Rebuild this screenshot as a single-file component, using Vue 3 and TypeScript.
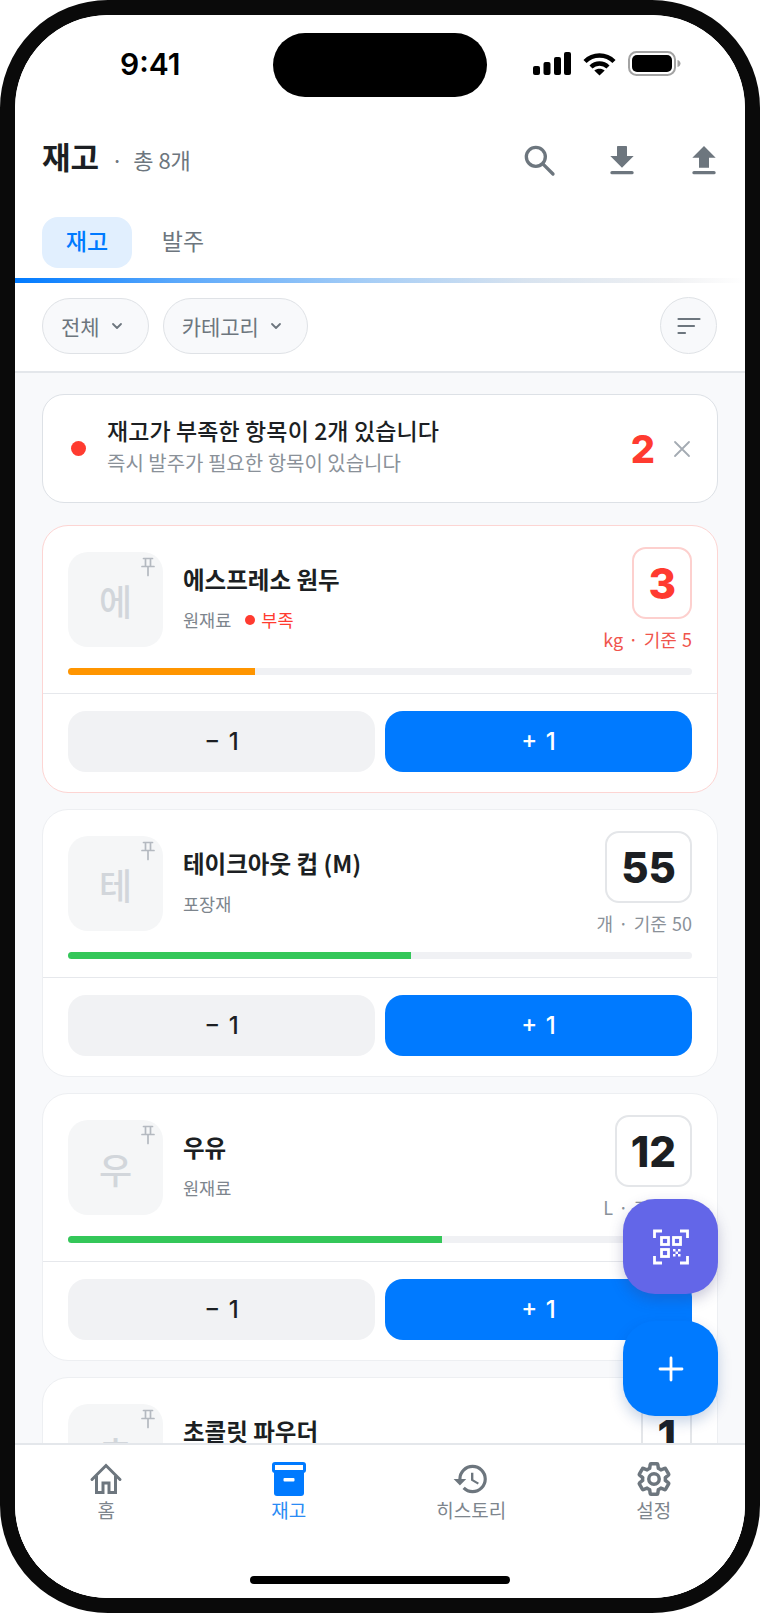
<script setup lang="ts">
interface Item {
  name: string;
  initial: string;
  category: string;
  qty: number;
  unit: string;
  base: number;
  percent: number;
  color: string;
  low?: boolean;
}

const items: Item[] = [
  { name: '에스프레소 원두', initial: '에', category: '원재료', qty: 3, unit: 'kg', base: 5, percent: 30, color: '#ff9500', low: true },
  { name: '테이크아웃 컵 (M)', initial: '테', category: '포장재', qty: 55, unit: '개', base: 50, percent: 55, color: '#34c759' },
  { name: '우유', initial: '우', category: '원재료', qty: 12, unit: 'L', base: 10, percent: 60, color: '#34c759' },
  { name: '초콜릿 파우더', initial: '초', category: '원재료', qty: 1, unit: 'kg', base: 3, percent: 20, color: '#ff9500' }
];

const navItems = [
  { key: 'home', label: '홈' },
  { key: 'stock', label: '재고', active: true },
  { key: 'history', label: '히스토리' },
  { key: 'settings', label: '설정' }
];
</script>

<template>
  <div class="phone">
    <div class="screen">
      <div class="island"></div>

      <div class="status-bar">
        <span class="clock">9:41</span>
        <div class="status-icons">
          <svg width="38" height="23" viewBox="0 0 38 23" fill="#000">
            <rect x="0" y="14" width="7" height="9" rx="2" />
            <rect x="10.5" y="10" width="7" height="13" rx="2" />
            <rect x="21" y="5" width="7" height="18" rx="2" />
            <rect x="31" y="0" width="7" height="23" rx="2" />
          </svg>
          <svg width="33" height="24" viewBox="0 0 33 24" fill="none" stroke="#000" stroke-width="4.4">
            <path d="M2 9.5C10 1.5 23 1.5 31 9.5" />
            <path d="M8 15C12.8 10.4 20.2 10.4 25 15" />
            <path d="M16.5 23.5L11.3 18.6C14.2 16.2 18.8 16.2 21.7 18.6Z" fill="#000" stroke="none" />
          </svg>
          <svg width="53" height="25" viewBox="0 0 53 25">
            <rect x="1" y="1" width="46" height="23" rx="7.5" fill="none" stroke="#a3a3a3" stroke-width="2" />
            <rect x="4" y="4" width="40" height="17" rx="5" fill="#000" />
            <path d="M49.5 9c2 .5 3 2 3 3.500s-1 3-3 3.500z" fill="#a3a3a3" />
          </svg>
        </div>
      </div>

      <header class="header">
        <div class="title-wrap">
          <h1 class="title">재고</h1>
          <span class="count">· &nbsp;총 8개</span>
        </div>
        <div class="header-icons">
          <svg class="head-icon" viewBox="0 0 24 24" fill="none" stroke="#6d767e" stroke-width="2" stroke-linecap="round">
            <circle cx="9.500" cy="9.500" r="5.700" />
            <path d="M14 14L19.800 19.800" />
          </svg>
          <svg class="head-icon" viewBox="0 0 24 24" fill="#6d767e">
            <path d="M19 9h-4V3.500a.5.500 0 0 0-.5-.5h-5a.5.500 0 0 0-.5.500V9H5l7 7 7-7z" />
            <rect x="5" y="18" width="14" height="2" rx="1" />
          </svg>
          <svg class="head-icon" viewBox="0 0 24 24" fill="#6d767e">
            <path d="M9 16h6v-6h4l-7-7-7 7h4v6z" />
            <rect x="5" y="18" width="14" height="2" rx="1" />
          </svg>
        </div>
      </header>

      <div class="tabs">
        <div class="tab tab-active">재고</div>
        <div class="tab">발주</div>
      </div>
      <div class="tab-line"></div>

      <div class="filters">
        <button class="chip">
          전체
          <svg width="14" height="14" viewBox="0 0 14 14" fill="none" stroke="#6d767e" stroke-width="1.800" stroke-linecap="round" stroke-linejoin="round"><path d="M3 5l4 4L11 5" /></svg>
        </button>
        <button class="chip">
          카테고리
          <svg width="14" height="14" viewBox="0 0 14 14" fill="none" stroke="#6d767e" stroke-width="1.800" stroke-linecap="round" stroke-linejoin="round"><path d="M3 5l4 4L11 5" /></svg>
        </button>
        <button class="sort-btn">
          <svg width="24" height="24" viewBox="0 0 24 24" fill="none" stroke="#6d767e" stroke-width="2.200" stroke-linecap="round">
            <path d="M1.500 5H22.500M1.500 12H17M1.500 19H8" />
          </svg>
        </button>
      </div>

      <main class="content">
        <section class="alert">
          <span class="alert-dot"></span>
          <div class="alert-text">
            <div class="alert-title">재고가 부족한 항목이 2개 있습니다</div>
            <div class="alert-sub">즉시 발주가 필요한 항목이 있습니다</div>
          </div>
          <span class="alert-count">2</span>
          <svg class="alert-close" width="18" height="18" viewBox="0 0 18 18" fill="none" stroke="#a4abb3" stroke-width="1.800" stroke-linecap="round">
            <path d="M2 2L16 16M16 2L2 16" />
          </svg>
        </section>

        <article v-for="item in items" :key="item.name" class="card" :class="{ 'card-low': item.low }">
          <div class="card-main">
            <div class="card-row">
              <div class="thumb">
                <span>{{ item.initial }}</span>
                <svg class="pin" width="14" height="20" viewBox="0 0 14 20" fill="none" stroke="#b4b9c0" stroke-width="1.700" stroke-linecap="round">
                  <path d="M2.500 1.500H11.500M4.500 1.500V9M9.500 1.500V9M1 9.500H13M7 9.500V18.500" />
                </svg>
              </div>
              <div class="info">
                <div class="name">{{ item.name }}</div>
                <div class="meta">
                  <span>{{ item.category }}</span>
                  <span v-if="item.low" class="low-tag"><i></i>부족</span>
                </div>
              </div>
              <div class="stock">
                <div class="qty-box">{{ item.qty }}</div>
                <div class="qty-sub">{{ item.unit }} · 기준 {{ item.base }}</div>
              </div>
            </div>
            <div class="progress">
              <div class="progress-fill" :style="{ width: item.percent + '%', background: item.color }"></div>
            </div>
          </div>
          <div class="actions">
            <button class="btn btn-minus">− 1</button>
            <button class="btn btn-plus">+ 1</button>
          </div>
        </article>
      </main>

      <button class="fab fab-scan">
        <svg width="36" height="36" viewBox="0 0 36 36" fill="none" stroke="#fff" stroke-width="2.800">
          <path d="M1.500 9V2H9M27 2H34.500V9M1.500 27V34H9M27 34H34.500V27" />
          <rect x="8.500" y="8.500" width="7" height="7" />
          <rect x="20.500" y="8.500" width="7" height="7" />
          <rect x="8.500" y="20.500" width="7" height="7" />
          <path d="M20 20h2.500v2.500H20zM25 20h2.500v2.500H25zM22.500 22.500H25V25h-2.500zM20 25h2.500v2.500H20zM25 25h2.500v2.500H25z" fill="#fff" stroke="none" />
        </svg>
      </button>
      <button class="fab fab-add">
        <svg width="26" height="26" viewBox="0 0 26 26" fill="none" stroke="#fff" stroke-width="2.800" stroke-linecap="round">
          <path d="M13 2V24M2 13H24" />
        </svg>
      </button>

      <nav class="tabbar">
        <div v-for="nav in navItems" :key="nav.key" class="nav-item" :class="{ 'nav-active': nav.active }">
          <svg v-if="nav.key === 'home'" width="38" height="38" viewBox="0 0 38 38" fill="none" stroke="#6d767e" stroke-width="3">
            <path d="M5 19.500L19 5.500L33 19.500" stroke-linecap="round" />
            <path d="M9.500 16V32.500H16V23H22V32.500H28.500V16" />
          </svg>
          <svg v-else-if="nav.key === 'stock'" width="38" height="38" viewBox="0 0 38 38">
            <rect x="2" y="2" width="34" height="11" rx="3" fill="#007aff" />
            <rect x="5" y="5" width="28" height="5" fill="#fff" />
            <path d="M4 12H34V33a3 3 0 0 1-3 3H7a3 3 0 0 1-3-3Z" fill="#007aff" />
            <rect x="13.500" y="18" width="11" height="3.500" rx="1" fill="#fff" />
          </svg>
          <svg v-else-if="nav.key === 'history'" width="38" height="38" viewBox="0 0 24 24" fill="#6d767e">
            <path d="M13 3a9 9 0 0 0-9 9H1l3.890 3.890.07.140L9 12H6c0-3.870 3.130-7 7-7s7 3.130 7 7-3.130 7-7 7c-1.930 0-3.680-.790-4.940-2.060l-1.420 1.420A8.954 8.954 0 0 0 13 21a9 9 0 0 0 0-18zm-1 5v5l4.280 2.540.720-1.210-3.500-2.080V8H12z" />
          </svg>
          <svg v-else width="38" height="38" viewBox="0 0 24 24" fill="none" stroke="#6d767e" stroke-width="2.200" stroke-linejoin="round">
            <path d="M19.140 12.940c.040-.300.060-.610.060-.940 0-.320-.020-.640-.070-.940l2.030-1.580a.490.490 0 0 0 .120-.610l-1.920-3.320a.488.488 0 0 0-.590-.220l-2.390.960c-.500-.380-1.030-.700-1.620-.940l-.360-2.540a.484.484 0 0 0-.480-.410h-3.840c-.240 0-.430.170-.470.410l-.360 2.540c-.590.240-1.130.570-1.620.940l-2.390-.960c-.220-.080-.470 0-.590.220L2.740 8.870c-.120.210-.080.470.120.610l2.030 1.580c-.050.300-.090.630-.090.940s.020.640.070.940l-2.030 1.580a.490.490 0 0 0-.120.610l1.920 3.320c.120.220.370.290.590.220l2.390-.960c.500.380 1.030.700 1.620.940l.360 2.540c.050.240.240.410.480.410h3.840c.240 0 .440-.170.470-.410l.360-2.540c.590-.240 1.130-.560 1.620-.940l2.390.960c.220.080.470 0 .590-.220l1.920-3.320c.120-.220.070-.470-.120-.610l-2.010-1.580z" />
            <circle cx="12" cy="12" r="3.300" />
          </svg>
          <span class="nav-label">{{ nav.label }}</span>
        </div>
      </nav>

      <div class="home-area">
        <div class="home-bar"></div>
      </div>
    </div>
  </div>
</template>

<style scoped>
.phone {
  width: 760px;
  height: 1613px;
  box-sizing: border-box;
  border: 15px solid #0a0a0a;
  border-radius: 108px;
  background: #fff;
  overflow: hidden;
  font-family: "Noto Sans CJK KR", "Noto Sans", sans-serif;
  color: #1c1f23;
}

.screen {
  position: relative;
  height: 100%;
  display: flex;
  flex-direction: column;
  background: #fff;
  border-radius: 92px;
  overflow: hidden;
}

.island {
  position: absolute;
  top: 18px;
  left: 258px;
  width: 214px;
  height: 64px;
  border-radius: 32px;
  background: #000;
}

.status-bar {
  flex: none;
  height: 105px;
  display: flex;
  justify-content: space-between;
  padding: 33px 64px 0 105px;
  box-sizing: border-box;
}

.clock {
  font-family: Inter, sans-serif;
  font-size: 30px;
  font-weight: 600;
  line-height: 32px;
  color: #000;
}

.status-icons {
  display: flex;
  align-items: center;
  gap: 12px;
  height: 25px;
  margin-top: 3px;
}

.header {
  flex: none;
  height: 78px;
  display: flex;
  align-items: center;
  justify-content: space-between;
  padding: 0 21px 0 27px;
}

.title-wrap {
  display: flex;
  align-items: baseline;
  gap: 12px;
  margin-bottom: 8px;
}

.title {
  margin: 0;
  font-size: 31px;
  font-weight: 700;
  color: #1c1f23;
}

.count {
  font-size: 22px;
  color: #6d767e;
}

.header-icons {
  display: flex;
  gap: 42px;
  margin-top: 4px;
}

.head-icon {
  width: 40px;
  height: 40px;
}

.tabs {
  flex: none;
  display: flex;
  gap: 6px;
  padding: 19px 27px 10px;
}

.tab {
  width: 90px;
  height: 51px;
  box-sizing: border-box;
  padding-bottom: 6px;
  border-radius: 16px;
  display: flex;
  align-items: center;
  justify-content: center;
  font-size: 23px;
  color: #6d767e;
}

.tab-active {
  background: #e1effe;
  color: #007aff;
  font-weight: 500;
}

.tab-line {
  flex: none;
  height: 5px;
  background: linear-gradient(90deg, #007aff 0%, #5aa8fb 22%, #a5cdf6 48%, #d8e3ef 70%, #f0f1f3 90%, #ffffff 100%);
}

.filters {
  flex: none;
  display: flex;
  align-items: center;
  gap: 14px;
  padding: 14px 28px 17px 27px;
  border-bottom: 2px solid #e4e7eb;
}

.chip {
  height: 56px;
  padding: 0 24px 0 18px;
  display: flex;
  align-items: center;
  gap: 10px;
  border: 1.5px solid #dfe2e6;
  border-radius: 28px;
  background: #f8f9fb;
  font: inherit;
  font-size: 21px;
  color: #6d767e;
}

.sort-btn {
  margin-left: auto;
  width: 57px;
  height: 57px;
  padding: 0;
  display: flex;
  align-items: center;
  justify-content: center;
  border: 1.5px solid #dfe2e6;
  border-radius: 50%;
  background: #f8f9fb;
}

.content {
  flex: 1;
  min-height: 0;
  overflow: hidden;
  background: #f8f9fb;
  padding: 21px 27px 0;
  display: flex;
  flex-direction: column;
  gap: 16px;
}

.alert {
  flex: none;
  height: 109px;
  box-sizing: border-box;
  margin-bottom: 6px;
  display: flex;
  align-items: center;
  padding: 0 26px 0 28px;
  border: 1.5px solid #dde1e6;
  border-radius: 22px;
  background: #fff;
}

.alert-dot {
  width: 15px;
  height: 15px;
  border-radius: 50%;
  background: #ff3b30;
  margin-right: 21px;
}

.alert-text {
  flex: 1;
  margin-top: -6px;
}

.alert-title {
  font-size: 23px;
  font-weight: 500;
  letter-spacing: 0.1px;
  line-height: 32px;
}

.alert-sub {
  margin-top: 2px;
  font-size: 20px;
  line-height: 30px;
  color: #8a9199;
}

.alert-count {
  font-family: Inter, sans-serif;
  font-size: 38px;
  font-weight: 800;
  color: #ff3b30;
  margin-right: 18px;
}

.card {
  flex: none;
  height: 268px;
  box-sizing: border-box;
  border: 1.5px solid #edeff2;
  border-radius: 26px;
  background: #fff;
}

.card-low {
  border-color: #fdd5d3;
}

.card-main {
  height: 168px;
  box-sizing: border-box;
  padding: 21px 25px 0;
  border-bottom: 1.5px solid #e6e8ec;
}

.card-row {
  height: 102px;
  display: flex;
  align-items: flex-start;
}

.thumb {
  position: relative;
  flex: none;
  width: 95px;
  height: 95px;
  margin-top: 5px;
  border-radius: 20px;
  background: #f5f6f7;
  display: flex;
  align-items: center;
  justify-content: center;
  font-size: 36px;
  font-weight: 500;
  color: #d2d6db;
}

.pin {
  position: absolute;
  top: 5px;
  right: 8px;
}

.info {
  flex: 1;
  margin: 15px 0 0 20px;
}

.name {
  font-size: 23.500px;
  font-weight: 600;
  line-height: 34px;
  color: #1c1f23;
}

.meta {
  margin-top: 10px;
  display: flex;
  align-items: center;
  gap: 14px;
  font-size: 17.500px;
  line-height: 28px;
  color: #7d858d;
}

.low-tag {
  display: flex;
  align-items: center;
  gap: 6px;
  color: #ff3b30;
}

.low-tag i {
  width: 10px;
  height: 10px;
  border-radius: 50%;
  background: #ff3b30;
}

.stock {
  flex: none;
  display: flex;
  flex-direction: column;
  align-items: flex-end;
}

.qty-box {
  height: 72px;
  padding: 0 14px;
  box-sizing: border-box;
  display: flex;
  align-items: center;
  justify-content: center;
  border: 2.500px solid #e4e6e9;
  border-radius: 14px;
  font-family: Inter, sans-serif;
  font-size: 42px;
  font-weight: 800;
  color: #1c1f23;
}

.card-low .qty-box {
  border-color: #fdd0ce;
  color: #ff3b30;
}

.qty-sub {
  margin-top: 6px;
  font-size: 18px;
  word-spacing: 1.200px;
  line-height: 28px;
  white-space: nowrap;
  color: #8a9199;
}

.card-low .qty-sub {
  color: #f0544c;
}

.progress {
  margin-top: 19px;
  height: 7px;
  border-radius: 4px;
  background: #f0f1f4;
  overflow: hidden;
}

.progress-fill {
  height: 100%;
}

.actions {
  display: flex;
  gap: 10px;
  padding: 17px 25px 0;
}

.btn {
  flex: 1;
  height: 61px;
  border: none;
  border-radius: 18px;
  font-family: Inter, "Noto Sans CJK KR", sans-serif;
  font-size: 24px;
  font-weight: 500;
  word-spacing: 2px;
}

.btn-minus {
  background: #f1f2f4;
  color: #1c1f23;
}

.btn-plus {
  background: #007aff;
  color: #fff;
}

.fab {
  position: absolute;
  right: 27px;
  width: 95px;
  height: 95px;
  padding: 0;
  border: none;
  border-radius: 32px;
  display: flex;
  align-items: center;
  justify-content: center;
}

.fab-scan {
  top: 1184px;
  background: #6366e8;
  box-shadow: 0 6px 14px rgba(60, 60, 120, 0.28);
}

.fab-add {
  top: 1306px;
  background: #007aff;
  box-shadow: 0 6px 14px rgba(0, 60, 140, 0.22);
}

.tabbar {
  position: relative;
  flex: none;
  height: 102px;
  box-sizing: border-box;
  display: grid;
  grid-template-columns: repeat(4, 1fr);
  padding-top: 15px;
  border-top: 2px solid #e4e7eb;
  background: #fff;
}

.nav-item {
  display: flex;
  flex-direction: column;
  align-items: center;
  font-size: 19px;
  color: #7d858d;
}

.nav-active {
  color: #2a8bf5;
}

.nav-label {
  line-height: 28px;
  margin-top: -2px;
}

.home-area {
  flex: none;
  height: 53px;
  background: #fff;
  display: flex;
  justify-content: center;
}

.home-bar {
  width: 260px;
  height: 8px;
  margin-top: 31px;
  border-radius: 4px;
  background: #000;
}
</style>

<style>
html,
body {
  margin: 0;
  background: #fff;
}
</style>
